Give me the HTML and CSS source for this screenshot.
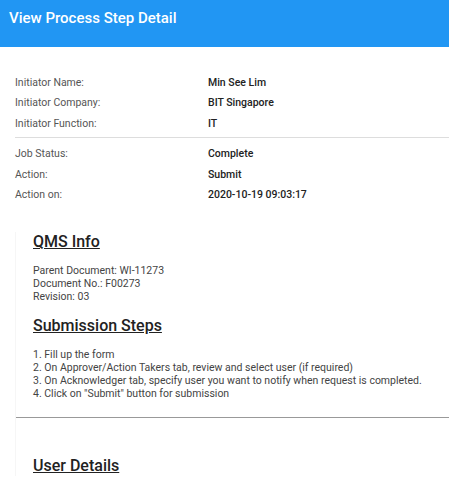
FILE: index.html
```html
<!DOCTYPE html>
<html>
<head>
<meta charset="utf-8">
<link rel="stylesheet" href="styles.css">
</head>
<body>
<header class="topbar"><h1 class="title">View Process Step Detail</h1></header>
<main class="content">
  <section class="info">
    <div class="row"><span class="label">Initiator Name:</span><span class="value">Min See Lim</span></div>
    <div class="row"><span class="label">Initiator Company:</span><span class="value">BIT Singapore</span></div>
    <div class="row"><span class="label">Initiator Function:</span><span class="value">IT</span></div>
  </section>
  <hr class="sep">
  <section class="info">
    <div class="row"><span class="label">Job Status:</span><span class="value">Complete</span></div>
    <div class="row"><span class="label">Action:</span><span class="value">Submit</span></div>
    <div class="row"><span class="label">Action on:</span><span class="value">2020-10-19 09:03:17</span></div>
  </section>
  <section class="panel">
    <div class="doc">
      <h2 class="heading">QMS Info</h2>
      <p class="text">Parent Document: WI-11273<br>Document No.: F00273<br>Revision: 03</p>
      <h2 class="heading">Submission Steps</h2>
      <p class="text">1. Fill up the form<br>2. On Approver/Action Takers tab, review and select user (if required)<br>3. On Acknowledger tab, specify user you want to notify when request is completed.<br>4. Click on "Submit" button for submission</p>
    </div>
    <hr class="rule">
    <div class="doc">
      <h2 class="heading user">User Details</h2>
    </div>
  </section>
</main>
</body>
</html>
```
FILE: styles.css
```css
html, body { margin: 0; padding: 0; }
body { font-family: Roboto, "Noto Sans", sans-serif; background: #fff; color: #333; overflow: hidden; }
.topbar { background: #2196f3; height: 47px; padding: 0 9px; box-sizing: border-box; }
.title { margin: 0; padding-top: 8px; font-size: 15px; font-weight: 500; color: #fff; line-height: 20px; }
.content { padding: 25px 0 0 15px; }
.info { display: flex; flex-direction: column; }
.row { display: flex; height: 20.5px; align-items: center; font-size: 10.5px; }
.label { width: 193px; color: #555; }
.value { font-weight: 500; color: #222; }
.sep { border: 0; border-top: 1px solid #ddd; margin: 3px 0 6px; }
.panel { border-left: 1px solid #f6f6f6; margin-top: 27px; }
.doc { padding-left: 17px; }
.heading { margin: 0; font-size: 16px; font-weight: 500; text-decoration: underline; color: #222; line-height: 20px; }
.text { margin: 12px 0 13px; font-size: 10.5px; line-height: 13px; color: #444; }
.rule { border: 0; border-top: 1px solid #999; margin: 17px 0 0; }
.user { margin-top: 38px; }
```
